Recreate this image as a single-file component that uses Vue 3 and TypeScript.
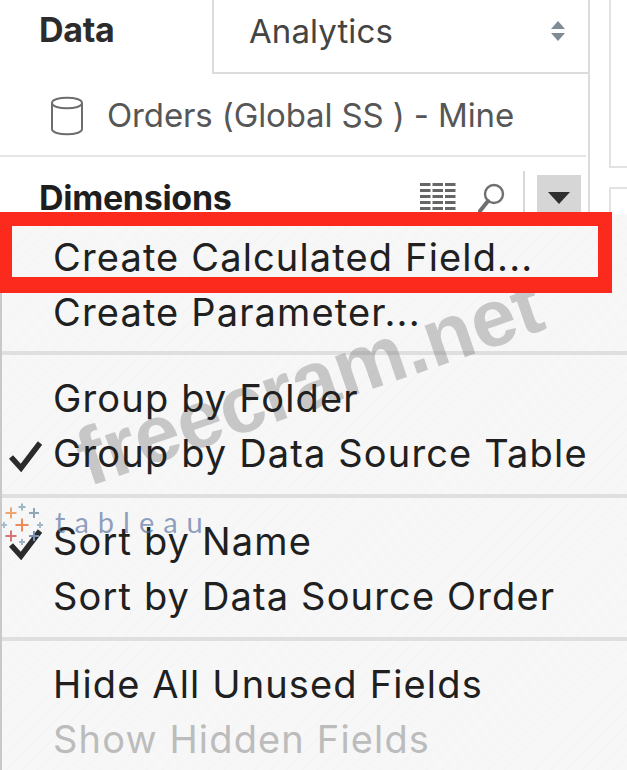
<script setup lang="ts">
interface MenuItem {
  label: string;
  checked?: boolean;
  disabled?: boolean;
}

const groups: MenuItem[][] = [
  [{ label: "Create Calculated Field..." }, { label: "Create Parameter..." }],
  [{ label: "Group by Folder" }, { label: "Group by Data Source Table", checked: true }],
  [{ label: "Sort by Name", checked: true }, { label: "Sort by Data Source Order" }],
  [{ label: "Hide All Unused Fields" }, { label: "Show Hidden Fields", disabled: true }],
];

const logoPlus = [
  { x: 11, y: 20, s: 11, c: "#eda66f" },
  { x: 22, y: 14, s: 7, c: "#9cb7c4" },
  { x: 34, y: 20, s: 10, c: "#8fa8b4" },
  { x: 22, y: 32, s: 13, c: "#ee8a57" },
  { x: 4, y: 32, s: 6, c: "#a9bccb" },
  { x: 40, y: 32, s: 6, c: "#a5b8c6" },
  { x: 11, y: 43, s: 11, c: "#d9737a" },
  { x: 22, y: 49, s: 6, c: "#9fb2c8" },
  { x: 34, y: 43, s: 10, c: "#7c92b5" },
];
</script>

<template>
  <div class="page">
    <div class="sidebar">
      <div class="tabs">
        <div class="tab-data">Data</div>
        <div class="tab-analytics">
          <span>Analytics</span>
          <svg width="16" height="22" viewBox="0 0 16 22">
            <path d="M8 1 L15 9 H1 Z" fill="#7f8b95" />
            <path d="M8 21 L15 13 H1 Z" fill="#7f8b95" />
          </svg>
        </div>
      </div>
      <div class="source">
        <svg width="34" height="44" viewBox="0 0 34 44" fill="none" stroke="#6d6d6d" stroke-width="2">
          <path d="M2 10 C2 3 32 3 32 10 V36 C32 43 2 43 2 36 Z" />
          <path d="M2 10 C2 17 32 17 32 10" />
        </svg>
        <span>Orders (Global SS ) - Mine</span>
      </div>
      <div class="dims">
        <span class="dims-title">Dimensions</span>
        <svg class="grid-icon" width="36" height="28" viewBox="0 0 36 28" fill="#666">
          <template v-for="row in 5" :key="row">
            <rect v-for="col in 3" :key="col" :x="(col - 1) * 12.5" :y="(row - 1) * 6" width="10.5" height="3" />
          </template>
        </svg>
        <svg class="search-icon" width="28" height="30" viewBox="0 0 28 30" fill="none" stroke="#6f6f6f">
          <circle cx="16" cy="11" r="9" stroke-width="2.4" />
          <path d="M10 18 L2 28" stroke-width="4" stroke-linecap="round" />
        </svg>
        <div class="dims-sep"></div>
        <div class="dims-btn"><div class="triangle"></div></div>
      </div>
    </div>
    <div class="side-lines">
      <div class="pane-top"></div>
      <div class="pane-bottom"></div>
    </div>

    <div class="menu">
      <div v-for="(group, i) in groups" :key="i" class="menu-group">
        <div v-for="item in group" :key="item.label" class="menu-item" :class="{ disabled: item.disabled }">
          <svg v-if="item.checked" class="check" width="36" height="32" viewBox="0 0 36 32" fill="none" stroke="#2b2b2b" stroke-width="5.5">
            <path d="M3 17 L13 28 L32 3" />
          </svg>
          {{ item.label }}
        </div>
      </div>
    </div>

    <div class="red-box"></div>
    <div class="wm-text">freecram.net</div>
    <div class="wm-logo">
      <svg width="46" height="56" viewBox="0 0 46 56" fill="none" stroke-width="2">
        <path
          v-for="(p, i) in logoPlus"
          :key="i"
          :d="`M${p.x - p.s / 2} ${p.y} H${p.x + p.s / 2} M${p.x} ${p.y - p.s / 2} V${p.y + p.s / 2}`"
          :stroke="p.c"
        />
      </svg>
      <span>tableau</span>
    </div>
  </div>
</template>

<style>
html,
body {
  margin: 0;
  background: #fff;
}
</style>

<style scoped>
.page {
  position: relative;
  width: 627px;
  height: 770px;
  overflow: hidden;
  display: flex;
  font-family: "Inter", "Liberation Sans", sans-serif;
  color: #222;
  background: #fff;
}
.sidebar {
  width: 590px;
  height: 214px;
  box-sizing: border-box;
  border-right: 2px solid #dcdcdc;
  flex: none;
}
.tabs {
  display: flex;
  height: 74px;
}
.tab-data {
  width: 212px;
  box-sizing: border-box;
  padding: 8px 0 0 39px;
  font-size: 34px;
  font-weight: 700;
  line-height: 44px;
  color: #2c2c2c;
  letter-spacing: -0.3px;
}
.tab-analytics {
  flex: 1;
  display: flex;
  justify-content: space-between;
  align-items: flex-start;
  box-sizing: border-box;
  padding: 9px 22px 0 35px;
  border-left: 2px solid #dcdcdc;
  border-bottom: 2px solid #dcdcdc;
  font-size: 33px;
  line-height: 44px;
  letter-spacing: 0.1px;
  color: #444;
}
.tab-analytics svg {
  margin-top: 11px;
}
.source {
  display: flex;
  align-items: center;
  gap: 23px;
  height: 83px;
  margin-right: 2px;
  padding-left: 50px;
  box-sizing: border-box;
  border-bottom: 2px solid #e6e6e6;
  font-size: 33px;
  letter-spacing: -0.13px;
  color: #565656;
}
.dims {
  display: flex;
  align-items: flex-start;
  height: 57px;
}
.dims-title {
  margin: 23px 0 0 39px;
  font-size: 34px;
  font-weight: 700;
  line-height: 36px;
  color: #1e1e1e;
  letter-spacing: -0.3px;
  flex: 1;
}
.grid-icon {
  margin: 26px -1px 0 0;
}
.search-icon {
  margin: 26px 0 0 23px;
}
.dims-sep {
  width: 2px;
  height: 42px;
  margin: 14px 12px 0 17px;
  background: #d8d8d8;
}
.dims-btn {
  width: 44px;
  height: 40px;
  margin: 18px 7px 0 0;
  background: #d6d6d6;
  display: flex;
  justify-content: center;
  padding-top: 17px;
  box-sizing: border-box;
}
.triangle {
  width: 0;
  height: 0;
  border-left: 11px solid transparent;
  border-right: 11px solid transparent;
  border-top: 12px solid #2f2f2f;
}
.side-lines {
  flex: 1;
  height: 214px;
  padding-left: 19px;
}
.pane-top {
  height: 168px;
  box-sizing: border-box;
  border-left: 2px solid #e2e2e2;
  border-bottom: 2px solid #e2e2e2;
}
.pane-bottom {
  height: 26px;
  margin-top: 19px;
  border-left: 2px solid #e2e2e2;
  border-top: 2px solid #e2e2e2;
}
.menu {
  position: absolute;
  top: 214px;
  left: 0;
  right: 0;
  bottom: 0;
  border-left: 2px solid #c9c9c9;
  background-color: #f7f7f7;
  background-image: repeating-linear-gradient(
    -45deg,
    transparent 0,
    transparent 9px,
    #f5f5f5 9px,
    #f5f5f5 11px
  );
}
.menu-group {
  height: 143px;
  box-sizing: border-box;
  padding: 16px 0 0 51px;
  border-bottom: 4px solid #dfdfdf;
}
.menu-group:first-child {
  height: 141px;
}
.menu-group:last-child {
  border-bottom: none;
}
.menu-item {
  position: relative;
  z-index: 2;
  height: 55px;
  line-height: 55px;
  font-size: 38px;
  letter-spacing: 1.15px;
  color: #202020;
  white-space: nowrap;
}
.menu-item.disabled {
  color: #bcbcbc;
}
.check {
  position: absolute;
  left: -45px;
  top: 14px;
}
.red-box {
  position: absolute;
  z-index: 3;
  left: -6px;
  top: 212px;
  width: 618px;
  height: 81px;
  box-sizing: border-box;
  border: solid #fb2a1c;
  border-width: 14px 14px 16px 18px;
}
.wm-text {
  position: absolute;
  left: 66px;
  top: 331px;
  font-family: "Liberation Sans", sans-serif;
  font-size: 81px;
  font-weight: 700;
  line-height: 100px;
  white-space: nowrap;
  color: rgba(120, 120, 120, 0.38);
  transform: rotate(-19deg);
}
.wm-logo {
  position: absolute;
  z-index: 3;
  left: 0;
  top: 493px;
  display: flex;
  align-items: center;
}
.wm-logo span {
  margin-left: 9px;
  font-size: 29px;
  letter-spacing: 9px;
  color: rgba(95, 120, 165, 0.7);
  font-family: "Lato", sans-serif;
}
</style>
